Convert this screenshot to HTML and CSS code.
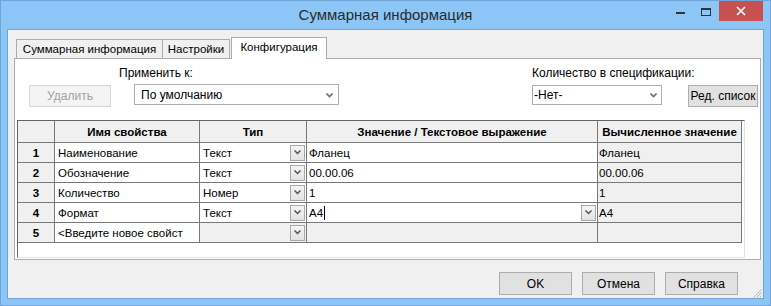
FILE: index.html
```html
<!DOCTYPE html>
<html lang="ru">

<head>
    <meta charset="UTF-8">
    <title>Суммарная информация</title>
    <link rel="stylesheet" href="styles.css">
</head>

<body>
    <div class="window">
        <div class="titlebar">
            <span class="title">Суммарная информация</span>
            <div class="caption-buttons">
                <div class="cap-btn">
                    <svg width="26" height="20"><rect x="9" y="11" width="9" height="2" fill="#333"/></svg>
                </div>
                <div class="cap-btn">
                    <svg width="26" height="20"><rect x="8.5" y="7.5" width="9" height="7" fill="none" stroke="#333"/><line x1="8" y1="8.5" x2="18" y2="8.5" stroke="#333"/></svg>
                </div>
                <div class="cap-btn close">
                    <svg width="44" height="20"><path d="M18 6 L26 14 M26 6 L18 14" stroke="#fff" stroke-width="1.6"/></svg>
                </div>
            </div>
        </div>

        <div class="client">
            <div class="tabs">
                <div class="tab tab-first">Суммарная информация</div>
                <div class="tab tab-second">Настройки</div>
                <div class="tab active">Конфигурация</div>
            </div>

            <div class="panel">
                <div class="labels">
                    <span class="label-apply">Применить к:</span>
                    <span>Количество в спецификации:</span>
                </div>

                <div class="controls">
                    <div class="btn btn-delete">Удалить</div>
                    <div class="combo combo-apply">
                        <span>По умолчанию</span>
                        <svg width="7" height="5"><path d="M0.5 0.5 L3.5 3.5 L6.5 0.5" fill="none" stroke="#707070" stroke-width="1.6"/></svg>
                    </div>
                    <div class="combo combo-qty">
                        <span>-Нет-</span>
                        <svg width="7" height="5"><path d="M0.5 0.5 L3.5 3.5 L6.5 0.5" fill="none" stroke="#707070" stroke-width="1.6"/></svg>
                    </div>
                    <div class="btn btn-edit">Ред. список</div>
                </div>

                <div class="grid-box">
                    <div class="grid">
                        <div class="cell head"></div>
                        <div class="cell head">Имя свойства</div>
                        <div class="cell head">Тип</div>
                        <div class="cell head">Значение / Текстовое выражение</div>
                        <div class="cell head">Вычисленное значение</div>

                        <div class="cell num">1</div>
                        <div class="cell">Наименование</div>
                        <div class="cell drop"><span>Текст</span><span class="cell-btn"><svg width="7" height="5"><path d="M0.5 0.5 L3.5 3.5 L6.5 0.5" fill="none" stroke="#555" stroke-width="1.5"/></svg></span></div>
                        <div class="cell value">Фланец</div>
                        <div class="cell grey calc">Фланец</div>

                        <div class="cell num">2</div>
                        <div class="cell">Обозначение</div>
                        <div class="cell drop"><span>Текст</span><span class="cell-btn"><svg width="7" height="5"><path d="M0.5 0.5 L3.5 3.5 L6.5 0.5" fill="none" stroke="#555" stroke-width="1.5"/></svg></span></div>
                        <div class="cell value">00.00.06</div>
                        <div class="cell grey calc">00.00.06</div>

                        <div class="cell num">3</div>
                        <div class="cell">Количество</div>
                        <div class="cell drop"><span>Номер</span><span class="cell-btn"><svg width="7" height="5"><path d="M0.5 0.5 L3.5 3.5 L6.5 0.5" fill="none" stroke="#555" stroke-width="1.5"/></svg></span></div>
                        <div class="cell value">1</div>
                        <div class="cell grey calc">1</div>

                        <div class="cell num">4</div>
                        <div class="cell">Формат</div>
                        <div class="cell drop"><span>Текст</span><span class="cell-btn"><svg width="7" height="5"><path d="M0.5 0.5 L3.5 3.5 L6.5 0.5" fill="none" stroke="#555" stroke-width="1.5"/></svg></span></div>
                        <div class="cell value drop"><span>A4<span class="caret"></span></span><span class="cell-btn"><svg width="7" height="5"><path d="M0.5 0.5 L3.5 3.5 L6.5 0.5" fill="none" stroke="#555" stroke-width="1.5"/></svg></span></div>
                        <div class="cell grey calc">A4</div>

                        <div class="cell num">5</div>
                        <div class="cell">&lt;Введите новое свойст</div>
                        <div class="cell grey drop"><span></span><span class="cell-btn"><svg width="7" height="5"><path d="M0.5 0.5 L3.5 3.5 L6.5 0.5" fill="none" stroke="#555" stroke-width="1.5"/></svg></span></div>
                        <div class="cell grey"></div>
                        <div class="cell grey"></div>
                    </div>
                </div>
            </div>

            <div class="footer">
                <div class="btn">OK</div>
                <div class="btn">Отмена</div>
                <div class="btn">Справка</div>
                <svg class="grip" width="10" height="10">
                    <path d="M9.5 1.5 L1.5 9.5 M9.5 4.5 L4.5 9.5 M9.5 7.5 L7.5 9.5" stroke="#b4b4b4"/>
                </svg>
            </div>
        </div>
    </div>
</body>

</html>
```

FILE: styles.css
```css
* {
    box-sizing: border-box;
}

body {
    margin: 0;
    font-family: "Liberation Sans", Arial, sans-serif;
    font-size: 12px;
    color: #000;
}

.window {
    width: 771px;
    height: 306px;
    display: flex;
    flex-direction: column;
    background: #8bc6f6;
    border: 1px solid #6ea6d9;
}

/* title bar */
.titlebar {
    height: 28px;
    flex-shrink: 0;
    display: grid;
    grid-template-columns: 1fr auto 1fr;
}

.title {
    grid-column: 2;
    font-size: 15px;
    line-height: 27px;
    color: #2b2b2b;
}

.caption-buttons {
    grid-column: 3;
    justify-self: end;
    display: flex;
    align-items: flex-start;
    margin-right: 7px;
}

.cap-btn {
    width: 26px;
    height: 20px;
}

.cap-btn svg {
    display: block;
}

.close {
    width: 44px;
    background: #c75050;
}

/* client area */
.client {
    flex: 1;
    display: flex;
    flex-direction: column;
    margin: 0 6px 6px;
    background: #f0f0f0;
    border: 1px solid #6ea6d9;
}

.tabs {
    display: flex;
    align-items: flex-end;
    height: 29px;
    padding: 7px 0 0 8px;
    margin-bottom: -1px;
}

.tab {
    height: 19px;
    margin-bottom: 1px;
    line-height: 18px;
    font-size: 11.5px;
    text-align: center;
    white-space: nowrap;
    background: #f0f0f0;
    border: 1px solid #acacac;
    border-bottom: none;
}

.tab-first {
    width: 147px;
}

.tab-second {
    width: 67px;
    border-left: none;
}

.tab.active {
    width: 96px;
    height: 22px;
    margin-bottom: 0;
    margin-left: 1px;
    line-height: 18px;
    background: #fff;
    position: relative;
    z-index: 1;
}

.panel {
    height: 202px;
    flex-shrink: 0;
    margin: 0 2px 0 6px;
    background: #fff;
    border: 1px solid #acacac;
}

.labels {
    display: flex;
    height: 16px;
    margin-top: 6px;
    line-height: 16px;
}

.label-apply {
    width: 413px;
    margin-left: 104px;
}

.controls {
    display: flex;
    align-items: flex-start;
    margin-top: 3px;
}

.btn {
    display: flex;
    align-items: center;
    justify-content: center;
    width: 73px;
    height: 23px;
    background: #e1e1e1;
    border: 1px solid #adadad;
}

.btn-delete {
    width: 82px;
    height: 22px;
    margin: 1px 0 0 14px;
    color: #a3a3a3;
    background: #f4f4f4;
    border-color: #d7d7d7;
}

.btn-edit {
    width: 70px;
    height: 22px;
    margin: 1px 0 0 26px;
}

.combo {
    display: flex;
    align-items: center;
    justify-content: space-between;
    background: #fff;
    border: 1px solid #abadb3;
}

.combo svg {
    margin-top: 1px;
}

.combo-apply {
    width: 205px;
    height: 21px;
    margin-left: 23px;
    padding: 0 5px 0 6px;
}

.combo-qty {
    width: 130px;
    height: 20px;
    margin: 1px 0 0 193px;
    padding: 0 4px 0 1px;
}

/* property grid */
.grid-box {
    width: 728px;
    height: 138px;
    margin: 13px 0 0 2px;
    border-left: 1px solid #646464;
    border-top: 1px solid #646464;
    border-right: 1px solid #e3e3e3;
    border-bottom: 1px solid #e3e3e3;
}

.grid {
    display: grid;
    grid-template-columns: 36px 144px 106px 290px 143px;
    grid-template-rows: 21px repeat(5, 19px);
    gap: 1px;
    width: max-content;
    padding: 0 1px 1px 0;
    background: #787878;
}

.cell {
    display: flex;
    align-items: center;
    padding-left: 3px;
    font-size: 11.5px;
    white-space: nowrap;
    overflow: hidden;
    background: #fff;
}

.head,
.num {
    justify-content: center;
    padding-left: 0;
    font-size: 11.5px;
    font-weight: bold;
    background: #f0f0f0;
}

.grey {
    background: #f0f0f0;
}

.value {
    padding-left: 2px;
}

.calc {
    padding-left: 1px;
}

.drop {
    justify-content: space-between;
}

.cell-btn {
    display: flex;
    align-items: center;
    justify-content: center;
    width: 15px;
    height: 16px;
    margin-right: 1px;
    background: linear-gradient(#f4f4f4, #e3e3e3);
    border: 1px solid #a8a8a8;
}

.caret {
    display: inline-block;
    width: 1px;
    height: 14px;
    margin-left: 1px;
    vertical-align: -3px;
    background: #000;
}

/* bottom buttons */
.footer {
    flex: 1;
    display: flex;
    justify-content: flex-end;
    gap: 10px;
}

.footer .btn {
    margin-top: 12px;
}

.grip {
    align-self: flex-end;
    margin: 0 1px 0 4px;
}
```
